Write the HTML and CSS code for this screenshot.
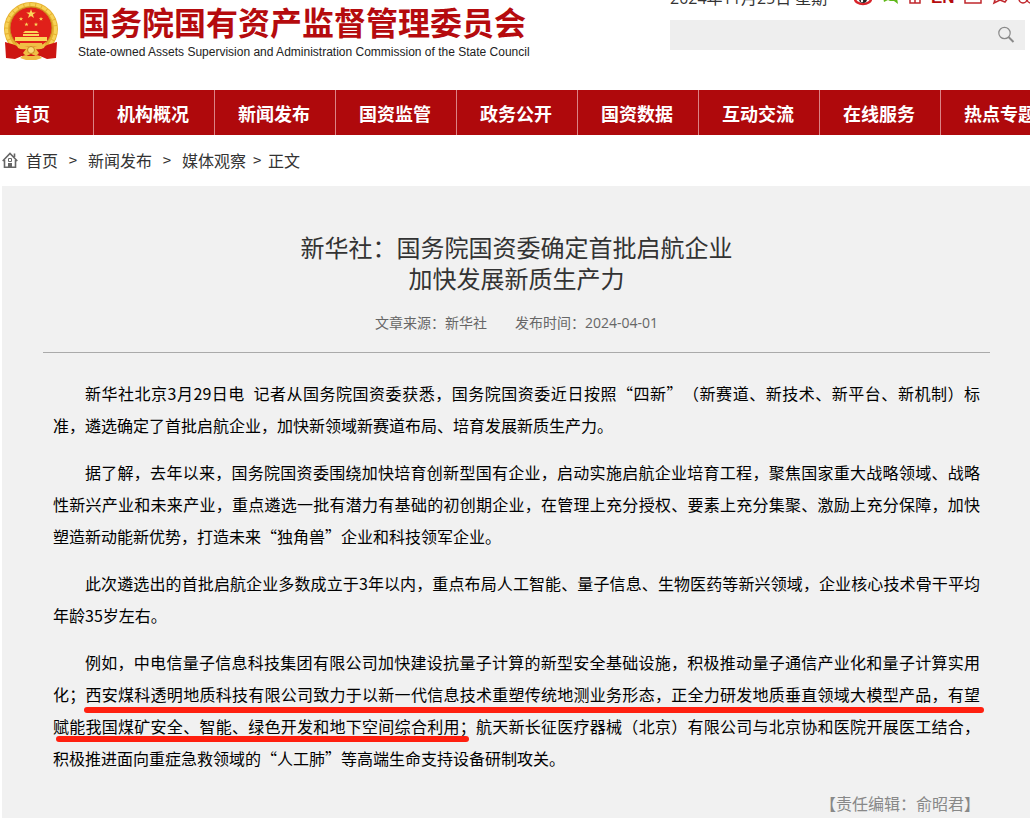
FILE: index.html
```html
<!DOCTYPE html>
<html lang="zh-CN">
<head>
<meta charset="utf-8">
<title>新华社：国务院国资委确定首批启航企业 加快发展新质生产力</title>
<link rel="stylesheet" href="styles.css">
</head>
<body>
<header class="header">
  <a class="brand" href="#">
    <svg class="emblem" viewBox="0 0 56 60" aria-hidden="true">
      <defs><path id="star" d="M0-5 1.200-1.600H4.800L1.900.6 3 4 0 1.900-3 4-1.900.6-4.800-1.600H-1.200Z"/></defs>
      <circle cx="28" cy="28" r="27" fill="#e6b02f"/>
      <circle cx="28" cy="28" r="24.500" fill="none" stroke="#f7d257" stroke-width="3" stroke-dasharray="5 1"/>
      <circle cx="28" cy="27" r="21" fill="#e0201a" stroke="#c98a1e"/>
      <g fill="#fbd75a">
        <use href="#star" x="28" y="13"/>
        <use href="#star" transform="translate(18 18) scale(.45)"/>
        <use href="#star" transform="translate(38 18) scale(.45)"/>
        <use href="#star" transform="translate(23.500 23.500) scale(.45)"/>
        <use href="#star" transform="translate(33 23.500) scale(.45)"/>
        <path d="M22 30h12l2 2H20zM20 33h16v2H20zM12 36h32v4H12z"/>
      </g>
      <path d="M17 42h22v3H17z" fill="#f0bf45"/>
      <path d="M2 41 12 44 18 48 38 48 44 44 54 41 53 57 44 58 37 55 33 58H23L19 55 12 58 3 57Z" fill="#cd1512"/>
      <path d="M13 41q5 5 15 4 10 1 15-4l-2 6q-5 2-8 1l3 4-3 3-5-2-5 2-3-3 3-4q-4 1-8-1z" fill="#f0bf45"/>
      <circle cx="28" cy="49" r="3.500" fill="#f9dc78" stroke="#c88820"/>
      <path d="M17 57q4-4 7-2h8q4-2 7 2l-6 2H23z" fill="#efbe46"/>
    </svg>
    <span class="brand-text">
      <span class="brand-cn">国务院国有资产监督管理委员会</span>
      <span class="brand-en">State-owned Assets Supervision and Administration Commission of the State Council</span>
    </span>
  </a>
  <div class="tools">
    <div class="topline">
      <span class="date">2024年11月25日 星期</span>
      <svg class="ico" viewBox="0 0 18 20"><ellipse cx="9" cy="11" rx="8" ry="5" fill="#fff" stroke="#d8232a" stroke-width="2.500"/><circle cx="9" cy="11" r="4" fill="#222"/><circle cx="8" cy="13" r="1.200" fill="#fff"/></svg>
      <svg class="ico" viewBox="0 0 18 20"><path d="M1 4h9l6 6 1 6-4-3H9l-2-1-4 2z" fill="#5fb81a"/></svg>
      <svg class="ico slim" viewBox="0 0 12 20"><path d="M1 6h10v9H1zM1 11h10M6 11v4M3 5h6" fill="none" stroke="#c0272d" stroke-width="1.500"/></svg>
      <a class="en" href="#">EN</a>
      <svg class="ico" viewBox="0 0 18 20"><path d="M1 3h16v12H1zl8 6 8-6" fill="none" stroke="#c0272d" stroke-width="1.500"/></svg>
      <svg class="ico" viewBox="0 0 18 20"><path d="M2 4v7l2 1-1 3 6-3 5 2 3-4V4z" fill="none" stroke="#c0272d" stroke-width="1.500"/></svg>
      <svg class="ico" viewBox="0 0 18 20"><circle cx="5" cy="11" r="4" fill="none" stroke="#c0272d" stroke-width="1.500"/><circle cx="13" cy="11" r="4" fill="none" stroke="#c0272d" stroke-width="1.500"/></svg>
    </div>
    <form class="search">
      <input class="search-input" type="text" aria-label="搜索">
      <button class="search-btn" type="button" aria-label="搜索"><svg viewBox="0 0 18 18"><circle cx="7.500" cy="7" r="5.700" fill="none" stroke="#8a8a8a" stroke-width="1.200"/><path d="m11.500 11 5 5" stroke="#8a8a8a" stroke-width="2"/></svg></button>
    </form>
  </div>
</header>
<nav class="nav">
  <a href="#">首页</a><a href="#">机构概况</a><a href="#">新闻发布</a><a href="#">国资监管</a><a href="#">政务公开</a><a href="#">国资数据</a><a href="#">互动交流</a><a href="#">在线服务</a><a href="#">热点专题</a>
</nav>
<div class="crumbs">
  <svg class="home" viewBox="0 0 16 16" aria-hidden="true"><path d="M.7 9 8 1.500 15.300 9M2.500 8v7.300h11V8M12.500 5V1.500" fill="none" stroke="#666" stroke-width="1.600"/><path d="M6.500 6.500h3v3h-3z" fill="none" stroke="#666"/><path d="M6 11h4v4H6z" fill="#666"/></svg>
  <a href="#">首页</a><span class="sep">&gt;</span><a href="#">新闻发布</a><span class="sep">&gt;</span><a href="#">媒体观察</a><span class="sep last">&gt;</span><span>正文</span>
</div>
<main class="article">
  <h1 class="title">新华社：国务院国资委确定首批启航企业<br>加快发展新质生产力</h1>
  <div class="meta"><span>文章来源：新华社</span><span>发布时间：2024-04-01</span></div>
  <div class="content">
    <p>新华社北京3月29日电&ensp;记者从国务院国资委获悉，国务院国资委近日按照“四新”（新赛道、新技术、新平台、新机制）标准，遴选确定了首批启航企业，加快新领域新赛道布局、培育发展新质生产力。</p>
    <p>据了解，去年以来，国务院国资委围绕加快培育创新型国有企业，启动实施启航企业培育工程，聚焦国家重大战略领域、战略性新兴产业和未来产业，重点遴选一批有潜力有基础的初创期企业，在管理上充分授权、要素上充分集聚、激励上充分保障，加快塑造新动能新优势，打造未来“独角兽”企业和科技领军企业。</p>
    <p>此次遴选出的首批启航企业多数成立于3年以内，重点布局人工智能、量子信息、生物医药等新兴领域，企业核心技术骨干平均年龄35岁左右。</p>
    <p class="marked">例如，中电信量子信息科技集团有限公司加快建设抗量子计算的新型安全基础设施，积极推动量子通信产业化和量子计算实用化；西安煤科透明地质科技有限公司致力于以新一代信息技术重塑传统地测业务形态，正全力研发地质垂直领域大模型产品，有望赋能我国煤矿安全、智能、绿色开发和地下空间综合利用；航天新长征医疗器械（北京）有限公司与北京协和医院开展医工结合，积极推进面向重症急救领域的“人工肺”等高端生命支持设备研制攻关。<span class="stroke stroke-a"></span><span class="stroke stroke-b"></span></p>
    <div class="editor">【责任编辑：俞昭君】</div>
  </div>
</main>
</body>
</html>
```
FILE: styles.css
```css
* { box-sizing: border-box; }
body {
  margin: 0;
  background: #fff;
  color: #333;
  font-family: "Noto Sans CJK SC", "Liberation Sans", sans-serif;
  font-size: 16px;
  text-spacing-trim: space-all;
  overflow-x: hidden;
}
a { color: inherit; text-decoration: none; }
.header {
  display: flex;
  justify-content: space-between;
  height: 90px;
  padding: 0 5px 0 3px;
  overflow: hidden;
}
.brand { display: flex; gap: 19px; }
.emblem { width: 56px; height: 60px; margin-top: 1px; }
.brand-text { display: flex; flex-direction: column; gap: 4px; white-space: nowrap; }
.brand-cn { font-size: 32px; line-height: 40px; padding-top: 1px; font-weight: 700; color: #b50b0e; }
.brand-en { font-family: "Liberation Sans", Arial, sans-serif; font-size: 12px; line-height: 14px; color: #222; }
.tools { width: 355px; margin-top: -12px; }
.topline { display: flex; align-items: center; height: 20px; gap: 9px; white-space: nowrap; }
.date { flex: 0 0 175px; font-family: "Open Sans", "Noto Sans CJK SC", sans-serif; line-height: 20px; }
.ico { flex: none; width: 18px; height: 20px; }
.slim { width: 14px; }
.en { font-family: "Liberation Sans", sans-serif; font-weight: 700; color: #b50b0e; font-size: 17px; line-height: 20px; }
.search { display: flex; height: 30px; margin: 12px 0 0; background: #eee; }
.search-input { flex: 1; min-width: 0; border: 0; padding: 0 8px; background: transparent; font: inherit; outline: 0; }
.search-btn { width: 38px; padding: 2px 0 0; border: 0; background: transparent; }
.search-btn svg { width: 18px; height: 18px; }
.nav { display: flex; height: 45px; background: #af090c; overflow: hidden; }
.nav a {
  flex: 0 0 121px;
  padding-right: 2px;
  border-right: 1px solid #db8385;
  color: #fff;
  font-size: 18px;
  font-weight: 700;
  line-height: 46px;
  text-align: center;
  white-space: nowrap;
}
.nav a:first-child { flex-basis: 94px; padding-left: 14px; text-align: left; }
.crumbs { display: flex; align-items: center; height: 51px; padding: 0 0 2px 2px; }
.home { width: 16px; height: 16px; margin-right: 8px; }
.sep { width: 30px; text-align: center; font-size: 15px; }
.sep.last { width: 22px; }
.article { margin-left: 2px; padding: 45px 40px 0 41px; background: #f1f1f1; }
.title { margin: 0; font-size: 24px; font-weight: 400; line-height: 31px; text-align: center; }
.meta {
  display: flex;
  justify-content: center;
  gap: 28px;
  padding: 20px 0 19px;
  border-bottom: 1px solid #aaa;
  color: #666;
  font-family: "Open Sans", "Noto Sans CJK SC", sans-serif;
  font-size: 14px;
  line-height: 20px;
}
.content { padding: 24px 10px 1px; color: #000; }
.content p { margin: 0 0 15px; line-height: 32px; text-align: justify; text-indent: 32px; }
.marked { position: relative; }
.stroke { position: absolute; height: 6px; border-radius: 3px; background: #ff2010; }
.stroke-a { top: 61px; left: 31px; right: -4px; }
.stroke-b { top: 90px; left: 3px; width: 413px; }
.editor { line-height: 28px; text-align: right; color: #888; }
```
